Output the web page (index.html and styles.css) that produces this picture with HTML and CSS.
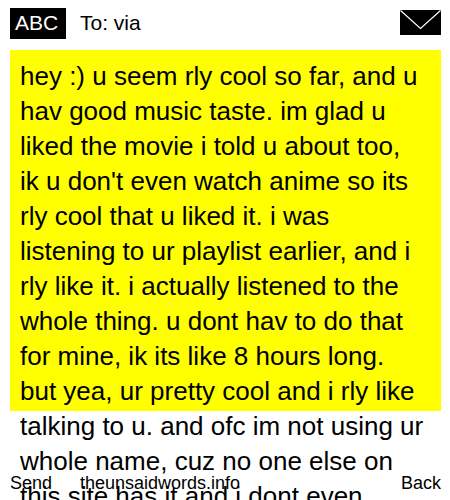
FILE: index.html
```html
<!DOCTYPE html>
<html lang="en">
<head>
  <meta charset="UTF-8">
  <meta name="viewport" content="width=device-width, initial-scale=1.0">
  <title>To: via</title>
  <link rel="stylesheet" href="styles.css">
</head>
<body>
  <!-- Top Bar -->
  <header class="top-bar">
    <span class="mode">ABC</span>
    <span class="recipient">To: via</span>
    <svg class="envelope" width="41" height="25" viewBox="0 0 41 25" role="img" aria-label="Message">
      <rect width="41" height="25" fill="#000"/>
      <path d="M0.5 0.5L20.5 18.5L40.5 0.5" fill="none" stroke="#fff" stroke-width="1.2"/>
    </svg>
  </header>

  <!-- Message -->
  <main class="message">
    <p>
      hey :) u seem rly cool so far, and u<br>
      hav good music taste. im glad u<br>
      liked the movie i told u about too,<br>
      ik u don't even watch anime so its<br>
      rly cool that u liked it. i was<br>
      listening to ur playlist earlier, and i<br>
      rly like it. i actually listened to the<br>
      whole thing. u dont hav to do that<br>
      for mine, ik its like 8 hours long.<br>
      but yea, ur pretty cool and i rly like<br>
      talking to u. and ofc im not using ur<br>
      whole name, cuz no one else on<br>
      this site has it and i dont even
    </p>
  </main>

  <!-- Bottom Bar -->
  <footer class="bottom-bar">
    <span class="send">Send</span>
    <span class="site">theunsaidwords.info</span>
    <span>Back</span>
  </footer>
</body>
</html>
```

FILE: styles.css
```css
* {
  box-sizing: border-box;
}

body {
  display: flex;
  flex-direction: column;
  height: 100vh;
  margin: 0;
  padding: 8px 9px 4px 10px;
  overflow: hidden;
  background-color: #fff;
  color: #000;
  font-family: "Liberation Sans", Arial, sans-serif;
}

.top-bar {
  display: flex;
  align-items: flex-start;
  height: 42px;
  font-size: 21px;
  line-height: 29px;
}

.mode {
  width: 56px;
  padding: 0 0 2px 5px;
  background-color: #000;
  color: #fff;
}

.recipient {
  flex: 1;
  margin-left: 14px;
}

.envelope {
  margin-top: 2px;
}

/* Long messages run out of the box and under the bottom bar */
.message {
  flex: 1;
  min-height: 0;
  padding: 9px 0 0 10px;
  background-color: #ff0;
  font-size: 26px;
  line-height: 35px;
}

.message p {
  margin: 0;
}

.bottom-bar {
  display: flex;
  margin-top: 60px;
  font-size: 18px;
  line-height: 25px;
}

.send {
  width: 70px;
}

.site {
  flex: 1;
}
```
